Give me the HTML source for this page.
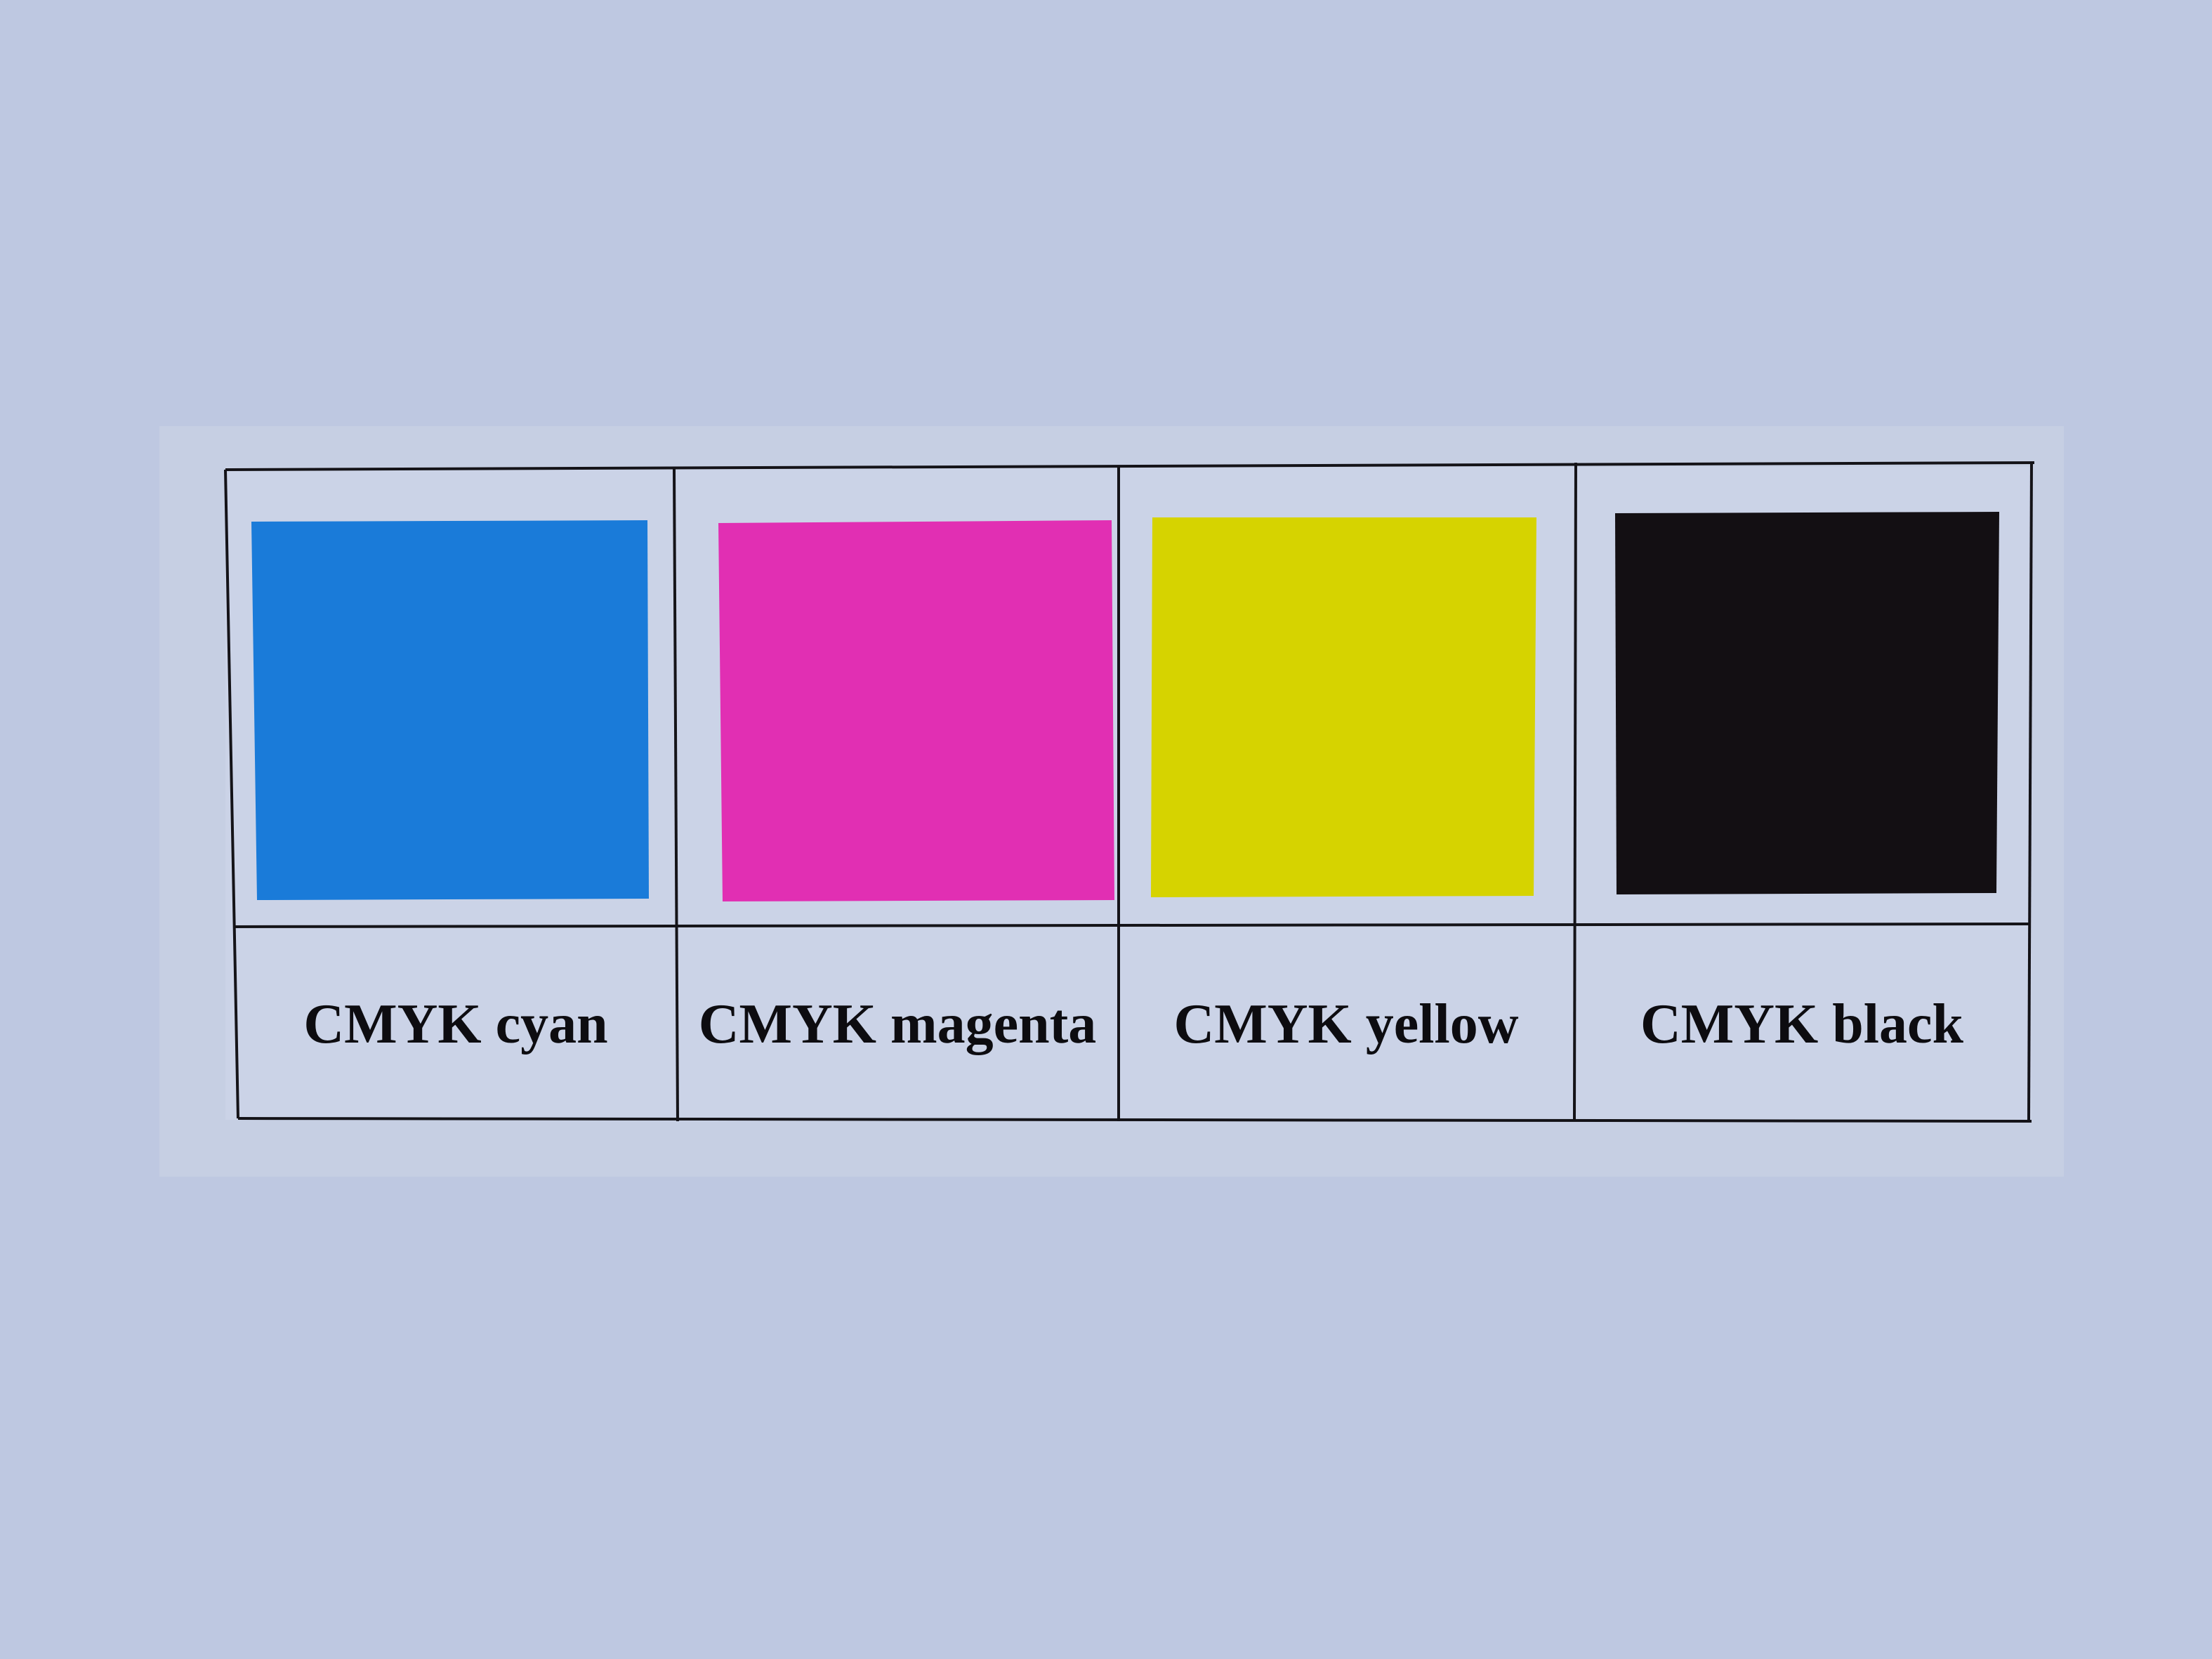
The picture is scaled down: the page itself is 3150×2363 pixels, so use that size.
<!DOCTYPE html>
<html><head><meta charset="utf-8"><style>
html,body{margin:0;padding:0;background:#bec8e1;}
svg{display:block}
</style></head><body>
<svg width="3150" height="2363" viewBox="0 0 3150 2363" xmlns="http://www.w3.org/2000/svg">
<rect width="3150" height="2363" fill="#bec8e1"/>
<rect x="227" y="607" width="2712" height="1069" fill="#c6cfe3"/>
<rect x="321" y="665" width="2572" height="930" fill="#cbd3e7"/>
<path d="M358 743 L922 741 L924 1280 L366 1282 Z" fill="#1a7bd9"/>
<path d="M1023 745 L1583 741 L1587 1282 L1029 1284 Z" fill="#e12fb3"/>
<path d="M1641 737 L2188 737 L2184 1276 L1639 1278 Z" fill="#d6d300"/>
<path d="M2300 731 L2847 729 L2843 1272 L2302 1274 Z" fill="#130f13"/>
<g stroke="#141318" stroke-width="4" fill="none">
<line x1="321" y1="669" x2="2897" y2="659"/>
<line x1="321" y1="669" x2="339" y2="1593"/>
<line x1="960" y1="667" x2="965" y2="1597"/>
<line x1="1593" y1="663" x2="1593" y2="1597"/>
<line x1="2244" y1="659" x2="2242" y2="1595"/>
<line x1="2893" y1="659" x2="2889" y2="1597"/>
<line x1="333" y1="1320" x2="2891" y2="1316"/>
<line x1="339" y1="1593" x2="2893" y2="1597"/>
</g>
<g font-family="'Liberation Serif', serif" font-weight="bold" font-size="80" fill="#0d0c10" text-anchor="middle">
<text x="649" y="1485">CMYK cyan</text>
<text x="1278" y="1485">CMYK magenta</text>
<text x="1917" y="1485">CMYK yellow</text>
<text x="2566" y="1485">CMYK black</text>
</g>
</svg>
</body></html>
